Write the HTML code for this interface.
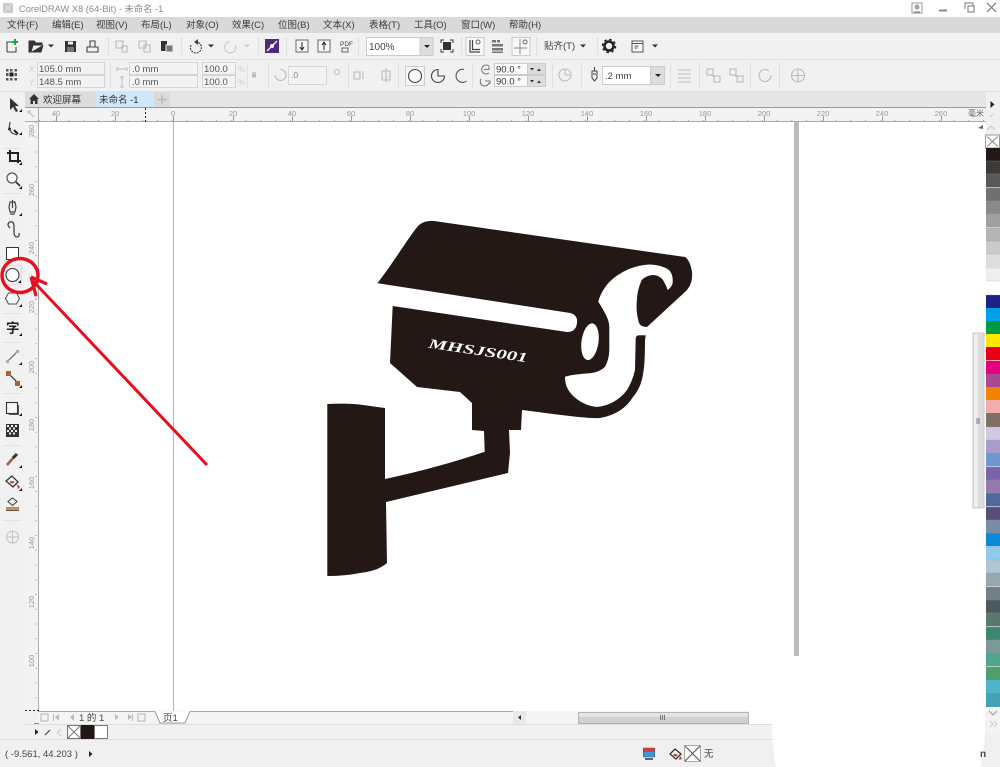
<!DOCTYPE html>
<html><head><meta charset="utf-8"><title>CorelDRAW X8</title>
<style>
html,body{margin:0;padding:0;background:#fff;width:1000px;height:767px;overflow:hidden}
svg{display:block;position:absolute;left:0;top:0}
text{font-family:"Liberation Sans","Noto Sans CJK SC",sans-serif}
.m{font-size:9.5px;fill:#3c3c3c}
.f{font-size:9.5px;fill:#555}
.r{font-size:7.5px;fill:#999}
.ic{fill:none;stroke:#444;stroke-width:1.1}
.dis{fill:none;stroke:#bbb;stroke-width:1.1}
</style></head><body>
<svg width="1000" height="767" viewBox="0 0 1000 767" xmlns="http://www.w3.org/2000/svg">
<!-- chrome backgrounds -->
<rect width="1000" height="767" fill="#f0f0f0"/>
<rect width="1000" height="17" fill="#fff"/>
<rect y="17" width="1000" height="16" fill="#d9d9d9"/>
<rect y="33" width="1000" height="26" fill="#f1f1f1"/>
<rect y="59" width="1000" height="1" fill="#e2e2e2"/>
<rect y="60" width="1000" height="31" fill="#f1f1f1"/>
<rect y="91" width="1000" height="1" fill="#e0e0e0"/>
<rect x="25" y="92" width="961" height="15" fill="#e6e6e6"/>
<rect x="0" y="92" width="25" height="675" fill="#f1f1f1"/>
<rect x="25" y="107" width="961" height="1" fill="#4ab6e2"/>
<rect x="25" y="108" width="961" height="14" fill="#f3f3f3"/>
<rect x="25" y="108" width="14" height="604" fill="#f3f3f3"/>
<rect x="39" y="122" width="947" height="589" fill="#fff"/>
<rect x="25" y="121" width="961" height="1" fill="#aaa"/>
<rect x="38" y="108" width="1" height="604" fill="#aaa"/>
<!-- title -->
<rect x="3" y="3" width="10" height="10" fill="#c4c9cc"/>
<path d="M4 12L12 4M5 5l6 6" stroke="#e8e8e8" fill="none"/>
<text x="19" y="12" font-size="9.3" fill="#8a8a8a">CorelDRAW X8 (64-Bit) - 未命名 -1</text>
<g fill="none" stroke="#999"><rect x="912" y="3" width="10" height="10"/><circle cx="917" cy="7" r="2" fill="#aaa"/><path d="M914 12h6" stroke="#777"/></g>
<rect x="939" y="9.5" width="8" height="2" fill="#888"/>
<g fill="none" stroke="#777"><path d="M965 9V3h8v3"/><rect x="968" y="6" width="6" height="6" fill="#fff"/></g>
<path d="M987 3l9 9M996 3l-9 9" stroke="#777" stroke-width="1.2"/>
<!-- menu -->
<g class="m">
<text x="7" y="28" class="m">文件(F)</text><text x="52" y="28" class="m">编辑(E)</text><text x="96" y="28" class="m">视图(V)</text><text x="141" y="28" class="m">布局(L)</text><text x="186" y="28" class="m">对象(O)</text><text x="232" y="28" class="m">效果(C)</text><text x="278" y="28" class="m">位图(B)</text><text x="323" y="28" class="m">文本(X)</text><text x="369" y="28" class="m">表格(T)</text><text x="414" y="28" class="m">工具(O)</text><text x="461" y="28" class="m">窗口(W)</text><text x="509" y="28" class="m">帮助(H)</text>
</g>
<!-- toolbar -->
<path class="ic" d="M7 52V42h5M7 52h9v-5"/><path d="M15 39v6M12 42h6" stroke="#1ba345" stroke-width="2"/>
<path d="M29 52V41h5l2 2h6v2H33l-2 7zM31 52h10l2-7" fill="#333" stroke="#333"/>
<path d="M48 44.500h6l-3 3z" fill="#333"/>
<path d="M65 41h11v11H65z" fill="#333"/><rect x="68" y="41.500" width="5" height="3" fill="#eee"/><rect x="67" y="47" width="7" height="5" fill="#777"/>
<path class="ic" d="M87 47h11v5H87zM90 47v-6h5v6"/>
<g class="dis"><path d="M116 41h7v7h-7zM122 46h5v6h-5z"/><path d="M139 41h7v7h-7zM144 45h6v7h-6z"/></g>
<path d="M161 41h6v10h-6z" fill="#333"/><rect x="166" y="45" width="7" height="7" fill="#777" stroke="#f1f1f1"/>
<path d="M191 45a5.500 5.500 0 1 0 5-3" fill="none" stroke="#444" stroke-width="1.200" stroke-dasharray="2 1"/><path d="M198 39v6l-4-3z" fill="#444"/>
<path d="M208 44.500h6l-3 3z" fill="#333"/>
<path d="M235 45a5.500 5.500 0 1 1-5-3" fill="none" stroke="#ccc" stroke-width="1.200"/>
<path d="M244 44.500h6l-3 3z" fill="#ccc"/>
<rect x="265" y="39" width="14" height="14" fill="#4b2a80"/><path d="M267 51l10-10" stroke="#f0e6f5" stroke-width="1.500"/><circle cx="272" cy="46" r="2" fill="#fff"/>
<g fill="#f8f8f8" stroke="#666"><rect x="296" y="40" width="12" height="12"/><rect x="318" y="40" width="12" height="12"/></g>
<path d="M302 42v7M300 47l2 3 2-3" stroke="#222" fill="none"/><path d="M324 50v-7M322 45l2-3 2 3" stroke="#222" fill="none"/>
<text x="340" y="46" font-size="6.500" fill="#444">PDF</text><path d="M342 48h6v4h-6z" fill="none" stroke="#666"/>
<rect x="366.500" y="37.500" width="54" height="18" fill="#fff" stroke="#ccc"/><text x="369" y="50" font-size="10" fill="#444">100%</text>
<rect x="420" y="37.500" width="13" height="18" fill="#ddd" stroke="#ccc"/><path d="M424 45h6l-3 3z" fill="#222"/>
<rect x="443" y="42" width="8" height="8" fill="#333"/><path d="M441 43v-3h3M450 40h3v3M453 49v3h-3M444 52h-3v-3" stroke="#333" fill="none"/>
<rect x="466" y="37.500" width="18" height="18" fill="#f8f8f8" stroke="#ccc"/><path d="M470 40v12h10M472.500 40v9.500H480" stroke="#444" fill="none" stroke-width="1.200"/><circle cx="478" cy="42" r="2" fill="none" stroke="#666"/>
<g fill="#777"><rect x="492" y="40" width="4" height="2.500"/><rect x="497" y="40" width="3" height="2.500"/><rect x="492" y="44" width="11" height="2.500"/><rect x="492" y="48" width="11" height="2.500"/><rect x="492" y="51.500" width="11" height="1.500"/></g>
<rect x="512" y="37.500" width="18" height="18" fill="#f8f8f8" stroke="#ccc"/><path d="M520 39v15M514 48h13" stroke="#888" fill="none"/><circle cx="525" cy="42" r="2" fill="none" stroke="#666"/>
<text x="544" y="49" class="m">贴齐(T)</text><path d="M580 44.500h6l-3 3z" fill="#333"/>
<circle cx="609" cy="46" r="4.500" fill="none" stroke="#222" stroke-width="2.500"/><circle cx="609" cy="46" r="6.500" fill="none" stroke="#222" stroke-width="1.500" stroke-dasharray="2.500 2.600"/>
<rect x="632" y="41" width="11" height="11" fill="#f8f8f8" stroke="#555"/><path d="M632 43.500h11M634.500 46h4M634.500 48h3" stroke="#555" fill="none"/>
<path d="M652 44.500h6l-3 3z" fill="#333"/>
<g stroke="#dfdfdf"><path d="M108.500 37v18M181.500 37v18M258.500 37v18M286.500 37v18M358.500 37v18M461.500 37v18M536.500 37v18M597.500 37v18"/></g>
<!-- property bar -->
<g fill="#555"><rect x="6" y="69" width="2.500" height="2.500"/><rect x="10" y="69" width="2.500" height="2.500"/><rect x="14.500" y="69" width="2.500" height="2.500"/><rect x="6" y="73" width="2.500" height="3"/><rect x="9.500" y="72.500" width="4" height="4" fill="#222"/><rect x="14.500" y="73" width="2.500" height="3"/><rect x="6" y="78" width="2.500" height="2.500"/><rect x="10" y="78" width="2.500" height="2.500"/><rect x="14.500" y="78" width="2.500" height="2.500"/></g>
<text x="29" y="72" font-size="8" fill="#ccc">X:</text><text x="29" y="85" font-size="8" fill="#ccc">Y:</text>
<g fill="#f3f3f3" stroke="#d5d5d5">
<rect x="37.500" y="62.500" width="67" height="12"/><rect x="37.500" y="75.500" width="67" height="12"/>
<rect x="129.500" y="62.500" width="68" height="12"/><rect x="129.500" y="75.500" width="68" height="12"/>
<rect x="202.500" y="62.500" width="33" height="12"/><rect x="202.500" y="75.500" width="33" height="12"/>
<rect x="288.500" y="66.500" width="38" height="18"/>
</g>
<text x="39" y="72" class="f">105.0 mm</text><text x="39" y="85" class="f">148.5 mm</text>
<text x="132" y="72" class="f">.0 mm</text><text x="132" y="85" class="f">.0 mm</text>
<text x="204" y="72" class="f">100.0</text><text x="204" y="85" class="f">100.0</text>
<text x="291" y="78" font-size="8.500" fill="#888">.0</text>
<text x="238" y="72" font-size="8" fill="#ccc">%</text><text x="238" y="85" font-size="8" fill="#ccc">%</text>
<path d="M117 69h10M117 67v4M127 67v4M122 77v10M120 77h4M120 87h4" stroke="#bbb" fill="none"/>
<rect x="252" y="74" width="4" height="3.500" fill="#bbb"/><path d="M253 74v-1.500h2V74" stroke="#bbb" fill="none"/>
<path class="dis" d="M275 75a5.500 5.500 0 1 0 5.500-5.500"/><circle cx="337" cy="72" r="2.500" class="dis"/>
<g class="dis"><path d="M354 72h6v7h-6zM363 71v8"/><path d="M386 68v14M382 71h8v9h-8z"/></g>
<rect x="405.500" y="66.500" width="19" height="19" fill="#f8f8f8" stroke="#ccc"/><circle cx="415" cy="76" r="6.500" fill="none" stroke="#444" stroke-width="1.100"/>
<path d="M438 69.500a6.500 6.500 0 1 0 6.500 6.500H438z" fill="none" stroke="#444" stroke-width="1.100"/>
<path d="M464 69.500a6.500 6.500 0 1 0 2.500 11.500" fill="none" stroke="#555" stroke-width="1.100"/>
<path class="ic" style="stroke:#777" d="M489 66a4.500 4.500 0 1 0 0 7M484 69.500h5v-3"/><path class="ic" style="stroke:#777" d="M481 79a4.500 4.500 0 1 0 8 4M485 81h5v3"/>
<rect x="494.500" y="63.500" width="33" height="11" fill="#fbfbfb" stroke="#ccc"/><rect x="494.500" y="75.500" width="33" height="11" fill="#fbfbfb" stroke="#ccc"/>
<rect x="527.500" y="63.500" width="18" height="11" fill="#ddd" stroke="#ccc"/><rect x="527.500" y="75.500" width="18" height="11" fill="#ddd" stroke="#ccc"/>
<text x="496" y="72.500" class="f" style="fill:#333">90.0 °</text><text x="496" y="84.500" class="f" style="fill:#333">90.0 °</text>
<path d="M530 68h4l-2 2.500zM537 71h4l-2-2.500zM530 80h4l-2 2.500zM537 83h4l-2-2.500z" fill="#333"/>
<path class="dis" d="M565 69a6 6 0 1 1-.1 0zM565 75V69M565 75h6"/>
<path d="M592 71h5v7l-2.500 3-2.500-3zM594.500 67v4M593 74h3" fill="#eee" stroke="#444"/>
<rect x="602.500" y="66.500" width="48" height="18" fill="#fff" stroke="#ccc"/><text x="605" y="79" font-size="9.500" fill="#444">.2 mm</text>
<rect x="650.500" y="66.500" width="14" height="18" fill="#ddd" stroke="#ccc"/><path d="M655 74h6l-3 3z" fill="#222"/>
<g class="dis"><path d="M678 70h13M678 74h13M678 78h13M678 82h13"/>
<rect x="707" y="69" width="6" height="6"/><rect x="714" y="76" width="6" height="6"/><path d="M711 75l4 2"/>
<rect x="730" y="69" width="6" height="6"/><rect x="737" y="76" width="6" height="6"/><path d="M734 75l4 2"/>
<path d="M769 71a6 6 0 1 0 2 4"/>
<circle cx="798" cy="75.500" r="6.500"/><path d="M791.500 75.500h13M798 69v13"/></g>
<g stroke="#e0e0e0"><path d="M110.500 63v25M247.500 63v25M268.500 63v25M348.500 63v25M398.500 63v25M472.500 63v25M552.500 63v25M581.500 63v25M670.500 63v25M699.500 63v25M750.500 63v25M779.500 63v25"/></g>
<!-- tabs -->
<rect x="25" y="92" width="71" height="15" fill="#dcdcdc"/>
<path d="M29 99l5-5 5 5h-1.500v5H35v-3h-2v3h-2.500v-5z" fill="#333"/>
<text x="43" y="103" font-size="9.500" fill="#333">欢迎屏幕</text>
<rect x="96" y="92" width="58" height="15" fill="#cfe7fb"/>
<text x="99" y="103" font-size="9.500" fill="#333">未命名 -1</text>
<rect x="154" y="92" width="16" height="15" fill="#dadada"/>
<path d="M162 95v9M157.500 99.500h9" stroke="#bbb" stroke-width="1.500"/>
<!-- ruler ticks -->
<path d="M39 120.500H985" stroke="#aaa" stroke-dasharray="1 13.750"/>
<path d="M36 122V712" stroke="#aaa" stroke-width="1.500" stroke-dasharray="1 13.750"/>
<path d="M56.500 116v5M115.500 116v5M173.500 116v5M233.500 116v5M292.500 116v5M351.500 116v5M410.500 116v5M469.500 116v5M528.500 116v5M587.500 116v5M646.500 116v5M705.500 116v5M764.500 116v5M823.500 116v5M882.500 116v5M941.500 116v5" stroke="#999"/>
<path d="M145.500 108v14" stroke="#222" stroke-dasharray="2 2"/>
<path d="M25 710.500h14" stroke="#222" stroke-dasharray="2 2"/>
<path d="M34 723.500h5" stroke="#888"/>
<g class="r" text-anchor="middle">
<text x="56" y="116" class="r">40</text><text x="115" y="116" class="r">20</text><text x="173" y="116" class="r">0</text><text x="233" y="116" class="r">20</text><text x="292" y="116" class="r">40</text><text x="351" y="116" class="r">60</text><text x="410" y="116" class="r">80</text><text x="469" y="116" class="r">100</text><text x="528" y="116" class="r">120</text><text x="587" y="116" class="r">140</text><text x="646" y="116" class="r">160</text><text x="705" y="116" class="r">180</text><text x="764" y="116" class="r">200</text><text x="823" y="116" class="r">220</text><text x="882" y="116" class="r">240</text><text x="941" y="116" class="r">260</text>
</g>
<text x="968" y="116" font-size="8" fill="#666">毫米</text>
<path d="M28 111l6 6M28 111h3M28 111v3" stroke="#bbb" fill="none"/>
<g text-anchor="middle">
<text transform="translate(34 131) rotate(-90)" class="r">280</text>
<text transform="translate(34 190) rotate(-90)" class="r">260</text>
<text transform="translate(34 248) rotate(-90)" class="r">240</text>
<text transform="translate(34 307) rotate(-90)" class="r">220</text>
<text transform="translate(34 367) rotate(-90)" class="r">200</text>
<text transform="translate(34 425) rotate(-90)" class="r">180</text>
<text transform="translate(34 483) rotate(-90)" class="r">160</text>
<text transform="translate(34 543) rotate(-90)" class="r">140</text>
<text transform="translate(34 602) rotate(-90)" class="r">120</text>
<text transform="translate(34 661) rotate(-90)" class="r">100</text>
</g>
<!-- canvas -->
<rect x="173" y="122" width="1" height="589" fill="#b5b5b5"/>
<rect x="794" y="122" width="5" height="534" fill="#bcbcbc"/>
<!-- camera -->
<path fill="#231815" d="M376.700 284C392 265 408 238 418 226Q424 220 434 221L685 257Q690 260 692 272Q693 284 686 291L647 327L645 340C645 372 643 385 633 397C626 408 616 415 600 418C585 419 540 412 522 410L521 430H509L510 453L508 473L386 502L387 563Q378 571 360 573Q345 576 327.300 576V404Q350 403 363 405L385 408V479Q440 467 484.700 451.700L484 431L472 430V403L460 392L417 387L390 363L392.700 306Z"/>
<path fill="#fff" d="M370 282L570 313Q578 315 577 323Q576 332 567 332L392.700 306L370 303Z"/>
<path fill="#fff" d="M667.700 290Q673 286 672.700 281.700Q673 274 669 270Q662 265 650 264.500Q636 265 623.300 271.700Q612 278 606.700 285Q600 294 598.300 301.700Q602 307 605 313.300Q609 320 609.300 326.700V350Q609 360 605 366.700Q600 372 590 373.300Q575 374 565 376.700Q565 382 566.700 386.700Q570 394 576.700 399Q586 406 596.700 407Q606 406 613.300 402Q622 397 627 390Q633 380 635 370L635.700 338.300Q636 335 640 335.300L700 336V300L647 327Q641 327 639 323Q636 313 636.700 303Q637 290 641.700 280Q647 275 653 275Q659 275 663 280Q666 285 667.700 290Z"/>
<ellipse cx="590" cy="341.700" rx="8.500" ry="18.500" fill="#fff" transform="rotate(8 590 341.700)"/>
<text x="478" y="355" text-anchor="middle" transform="rotate(8.500 478 351)" font-size="13.500" font-weight="bold" font-style="italic" fill="#fff" textLength="100" lengthAdjust="spacingAndGlyphs" style="font-family:'Liberation Serif',serif">MHSJS001</text>
<!-- toolbox -->
<g stroke="#e3e3e3"><path d="M3 148.500H21M3 193.500H21M3 313.500H21M3 342.500H21M3 393.500H21M3 445.500H21M3 520.500H21"/></g>
<path d="M10 98l0 12 3-3 3 5 2-1-3-5h4z" fill="#333"/>
<path d="M19 112h3v-3z" fill="#111"/>
<path d="M10 122l-1 7 3 4 5 2" fill="none" stroke="#444" stroke-width="1.200"/><circle cx="9.500" cy="129" r="1.500" fill="#333"/><path d="M14 130l4 4" stroke="#222" stroke-width="2"/><path d="M19 135h3v-3z" fill="#111"/>
<path d="M10 150v11h11M7 153h11v10" fill="none" stroke="#222" stroke-width="2"/><path d="M19 165h3v-3z" fill="#111"/>
<circle cx="12" cy="178" r="5" fill="#f8f8f8" stroke="#555" stroke-width="1.200"/><path d="M16 182l4 4" stroke="#333" stroke-width="1.800"/><path d="M19 189h3v-3z" fill="#111"/>
<path d="M10 202h5l1 5-1 5h-5l-1-5z" fill="#eee" stroke="#444" stroke-width="1.200"/><path d="M12.500 200v8M10 214h5" stroke="#444" stroke-width="1.200"/><path d="M19 216h3v-3z" fill="#111"/>
<path d="M10 228q-4-4 0-6 4-1 4 4v6q0 5 3 5 3-.5 2-4" fill="none" stroke="#444" stroke-width="1.300"/>
<rect x="6.500" y="247.500" width="12" height="12" fill="#fdfdfd" stroke="#333" stroke-width="1"/>
<rect x="3.500" y="265.500" width="18" height="19" fill="#eee" stroke="#ddd"/>
<circle cx="12.500" cy="275" r="6.500" fill="#fff" stroke="#333" stroke-width="1.100"/><path d="M18 283h3v-3z" fill="#111"/>
<path d="M8.500 293h8l3 5.500-3 5.500h-8l-3-5.500z" fill="#f6f6f6" stroke="#555" stroke-width="1.100"/><path d="M19 307h3v-3z" fill="#111"/>
<text x="6" y="333" font-size="13.500" font-weight="bold" fill="#222">字</text><path d="M19 336h3v-3z" fill="#111"/>
<path d="M7 362l11-11" stroke="#666" stroke-width="1.200"/><rect x="6" y="360" width="3" height="3" fill="#aaa"/><rect x="16" y="350" width="3" height="3" fill="#aaa"/><path d="M19 365h3v-3z" fill="#111"/>
<path d="M8 373l9 9" stroke="#444" stroke-width="1.300"/><rect x="6" y="371" width="5" height="5" fill="#a8623a"/><rect x="15" y="381" width="5" height="5" fill="#a8623a"/><path d="M19 388h3v-3z" fill="#111"/>
<rect x="9" y="405" width="10" height="10" fill="#555"/><rect x="6.500" y="402.500" width="11" height="11" fill="#f6f6f6" stroke="#333" stroke-width="1.100"/><path d="M19 416h3v-3z" fill="#111"/>
<rect x="6" y="424" width="13" height="13" fill="#333"/>
<path d="M7 425h2v2H7zM11 425h2v2h-2zM15 425h2v2h-2zM9 427.500h2v2H9zM13 427.500h2v2h-2zM7 430h2v2H7zM11 430h2v2h-2zM15 430h2v2h-2zM9 432.500h2v2H9zM13 432.500h2v2h-2z" fill="#eee"/>
<path d="M7 465l7-8" stroke="#a8623a" stroke-width="2.500"/><path d="M13 458l4-4" stroke="#333" stroke-width="3"/><path d="M19 468h3v-3z" fill="#111"/>
<path d="M6 481l6-5 6 6-5 5z" fill="#f6f6f6" stroke="#333" stroke-width="1.300"/><path d="M9.500 482q3-2 5 0-2.500 3-5 0z" fill="#c0392b"/><path d="M17 484l3 3-2 2z" fill="#d9262c"/><path d="M19 491h3v-3z" fill="#111"/>
<path d="M12.500 498l4.500 3.500-4.500 4-4.500-4z" fill="#f6f6f6" stroke="#444" stroke-width="1.100"/><rect x="6" y="507" width="13" height="2" fill="#c9884f"/><rect x="6" y="509.500" width="13" height="1.500" fill="#555"/>
<circle cx="12.500" cy="537" r="6" fill="none" stroke="#c4c4c4" stroke-width="1.100"/><path d="M6.500 537h12M12.500 531v12" stroke="#c4c4c4" stroke-width="1.100"/>
<!-- palette -->
<path d="M990.500 101v7l4-3.500z" fill="#222"/>
<path d="M990 117l3-3" stroke="#ccc"/>
<path d="M987 130l4-4 4 4" stroke="#ccc" fill="none" stroke-width="1.200"/>
<path d="M978 128l5-3v4z" fill="#666"/>
<rect x="985.500" y="135" width="14" height="13" fill="#fff" stroke="#999"/><path d="M987 136.500l11 10M998 136.500l-11 10" stroke="#888"/>
<g>
<rect x="986" y="148" width="14" height="13.300" fill="#231815"/><rect x="986" y="161" width="14" height="13.300" fill="#3e3a39"/><rect x="986" y="174" width="14" height="13.300" fill="#595757"/><rect x="986" y="188" width="14" height="13.300" fill="#717071"/><rect x="986" y="201" width="14" height="13.300" fill="#898989"/><rect x="986" y="214" width="14" height="13.300" fill="#9fa0a0"/><rect x="986" y="228" width="14" height="13.300" fill="#b5b5b6"/><rect x="986" y="241" width="14" height="13.300" fill="#c9caca"/><rect x="986" y="254" width="14" height="13.300" fill="#dcdddd"/><rect x="986" y="268" width="14" height="13.300" fill="#efefef"/><rect x="986" y="281" width="14" height="14" fill="#fff"/>
<rect x="986" y="295" width="14" height="13.300" fill="#1d2088"/><rect x="986" y="308" width="14" height="13.300" fill="#00a0e9"/><rect x="986" y="321" width="14" height="13.300" fill="#009944"/><rect x="986" y="334" width="14" height="13.300" fill="#ffe800"/><rect x="986" y="347" width="14" height="13.300" fill="#e60012"/><rect x="986" y="361" width="14" height="13.300" fill="#e4007f"/><rect x="986" y="374" width="14" height="13.300" fill="#a84a90"/><rect x="986" y="387" width="14" height="13.300" fill="#f08300"/><rect x="986" y="400" width="14" height="13.300" fill="#f2acac"/><rect x="986" y="413" width="14" height="14" fill="#7f6f64"/>
<rect x="986" y="427" width="14" height="13.300" fill="#d0c8e4"/><rect x="986" y="440" width="14" height="13.300" fill="#a99ccb"/><rect x="986" y="453" width="14" height="13.300" fill="#6e97cf"/><rect x="986" y="467" width="14" height="13.300" fill="#7b63ac"/><rect x="986" y="480" width="14" height="13.300" fill="#9379ad"/><rect x="986" y="493" width="14" height="13.300" fill="#51689c"/><rect x="986" y="507" width="14" height="13.300" fill="#5a4d7c"/><rect x="986" y="520" width="14" height="13.300" fill="#7a8ca3"/><rect x="986" y="533" width="14" height="13.300" fill="#0a8ad8"/><rect x="986" y="547" width="14" height="13.300" fill="#8ecbee"/><rect x="986" y="560" width="14" height="13.300" fill="#b0c6d4"/><rect x="986" y="573" width="14" height="13.300" fill="#96a7ae"/><rect x="986" y="587" width="14" height="13.300" fill="#727f86"/><rect x="986" y="600" width="14" height="13.300" fill="#4b5960"/><rect x="986" y="613" width="14" height="13.300" fill="#59796f"/><rect x="986" y="627" width="14" height="13.300" fill="#3d8672"/><rect x="986" y="640" width="14" height="13.300" fill="#7b9a95"/><rect x="986" y="653" width="14" height="13.300" fill="#4fa68e"/><rect x="986" y="667" width="14" height="13.300" fill="#4f9f6c"/><rect x="986" y="680" width="14" height="13.300" fill="#4db4cc"/><rect x="986" y="693" width="14" height="14" fill="#44a0b4"/>
</g>
<g stroke="#999" stroke-width=".6" opacity=".55"><path d="M986 161h14M986 174h14M986 188h14M986 201h14M986 214h14M986 228h14M986 241h14M986 254h14M986 268h14M986 281h14M986 295h14M986 427h14M986 440h14M986 453h14M986 467h14M986 480h14M986 493h14M986 507h14M986 520h14M986 533h14M986 547h14M986 560h14M986 573h14M986 587h14M986 600h14M986 613h14M986 627h14M986 640h14M986 653h14M986 667h14M986 680h14M986 693h14"/></g>
<rect x="986" y="707" width="14" height="26" fill="#f4f4f4"/>
<path d="M989 711l4 4 4-4" stroke="#aaa" fill="none" stroke-width="1.300"/>
<path d="M990 721l3 3-3 3M994 721l3 3-3 3" stroke="#ccc" fill="none"/>
<!-- v scrollbar -->
<rect x="973" y="333" width="11" height="175" fill="#dcdcdc" stroke="#c8c8c8"/>
<rect x="974" y="334" width="4" height="173" fill="#eee"/>
<path d="M976 419h4M976 421h4M976 423h4" stroke="#777"/>
<!-- bottom -->
<rect x="39" y="711" width="947" height="13" fill="#f4f4f4"/>
<path d="M39 711.500H155M190 711.500H513" stroke="#aaa"/>
<path d="M155 711.500l5 11.500h25l5-11.500" fill="#fff" stroke="#999"/>
<text x="163" y="721" font-size="9.500" fill="#444">页1</text>
<g fill="#bbb"><path d="M55 717l4-3v7zM70 717l4-3v7zM53 714h1v7h-1zM115 714l4 3-4 3zM128 714l4 3-4 3zM132 714h1v7h-1z"/></g>
<g class="dis"><rect x="41" y="714" width="7" height="7"/><rect x="138" y="714" width="7" height="7"/></g>
<text x="79" y="721" font-size="9.500" fill="#444">1 的 1</text>
<rect x="513" y="711" width="13" height="13" fill="#e9e9e9"/><path d="M518 717.500l3-2.500v5z" fill="#333"/>
<rect x="25" y="724" width="961" height="15" fill="#f1f1f1"/>
<path d="M25 724.500H986M0 739.500H986" stroke="#dedede"/>
<path d="M35 729v6l3.500-3z" fill="#222"/>
<path d="M45 735l5-5" stroke="#444" stroke-width="1.200"/>
<path d="M61 729l-3.500 3.500 3.500 3.500" stroke="#ccc" fill="none"/>
<rect x="67.500" y="725.500" width="13" height="13" fill="#fff" stroke="#777"/><path d="M68 726l12 12M80 726l-12 12" stroke="#777"/>
<rect x="81" y="725" width="13.500" height="14" fill="#231815"/>
<rect x="94.500" y="725.500" width="13" height="13" fill="#fff" stroke="#777"/>
<text x="5" y="757" font-size="9.500" fill="#444">( -9.561, 44.203 )</text>
<path d="M89 751v6l3.500-3z" fill="#222"/>
<rect x="643" y="748" width="12" height="9" fill="#d43d3a"/><rect x="643" y="752" width="12" height="5" fill="#3a9ad9"/><path d="M645 759h8" stroke="#333" stroke-width="1.500"/><path d="M643.500 748h11v9h-11z" fill="none" stroke="#555" stroke-width=".6"/>
<path d="M670 754l5-5 6 5-5 5z" fill="#f6f6f6" stroke="#333" stroke-width="1.300"/><path d="M673 755q2.500-2 5 0-2.500 3-5 0z" fill="#c0392b"/><path d="M680 756l2 3-3 1z" fill="#d9262c"/>
<rect x="684.500" y="745.500" width="16" height="16" fill="#fff" stroke="#aaa"/><path d="M685 746l15 15M700 746l-15 15" stroke="#555" stroke-width="1.100"/>
<text x="704" y="757" font-size="9.500" fill="#444">无</text>
<!-- white erased patch bottom right -->
<path fill="#fff" d="M749 711H985V733Q985 745 981 767H776Q772 745 772 724H749Z"/>
<rect x="578.500" y="712.500" width="170" height="11" fill="#d0d0d0" stroke="#b5b5b5"/><rect x="579" y="713" width="169" height="4" fill="#e4e4e4"/>
<path d="M660.500 715v5M662.500 715v5M664.500 715v5" stroke="#777"/>
<text x="980" y="757" font-size="10" font-weight="bold" fill="#444">n</text>
<!-- red annotation -->
<ellipse cx="20" cy="275.500" rx="18" ry="17" fill="none" stroke="#e60f1d" stroke-width="3.400"/>
<path d="M207 465L33 281" stroke="#e60f1d" stroke-width="3" fill="none"/>
<path d="M31 277L47 284M31 277L36 296" stroke="#e60f1d" stroke-width="3.200" fill="none"/>
</svg>
</body></html>
